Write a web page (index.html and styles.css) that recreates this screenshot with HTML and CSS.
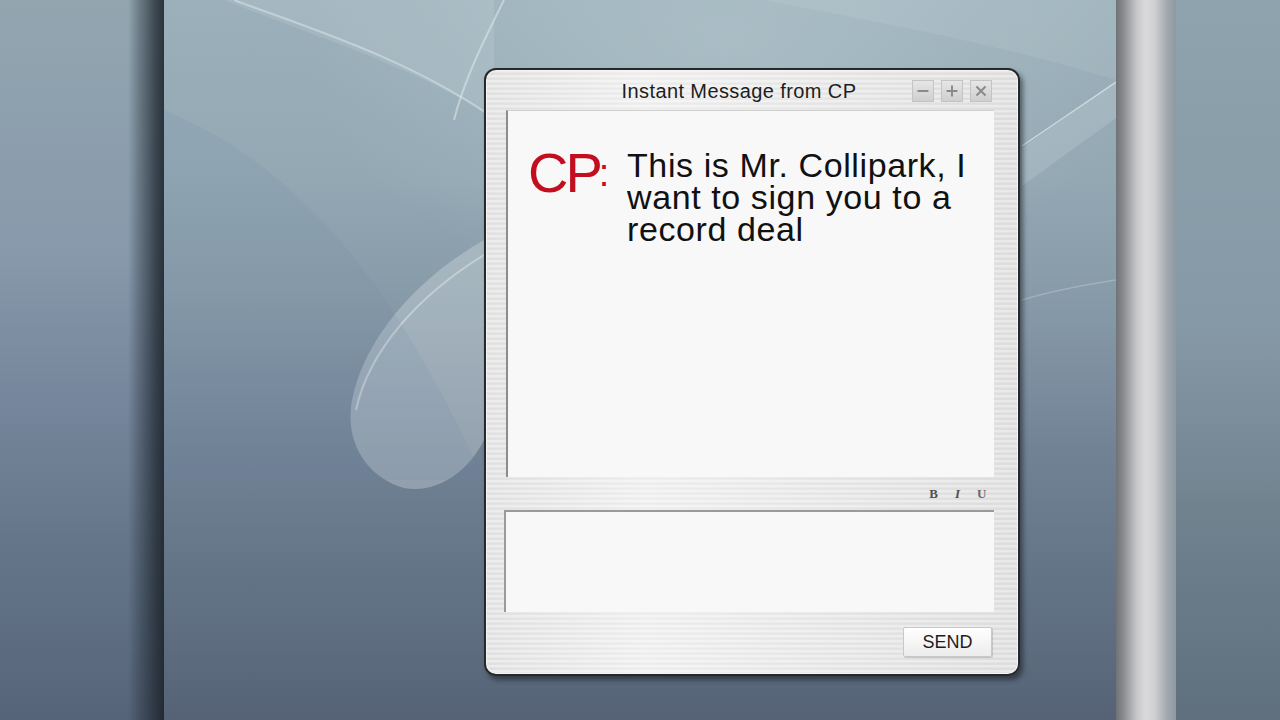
FILE: index.html
```html
<!DOCTYPE html>
<html lang="en">
<head>
  <meta charset="utf-8">
  <title>Instant Message from CP</title>
  <link rel="stylesheet" href="styles.css">
</head>
<body>
  <div class="scene">
    <div class="side side-left"></div>

    <main class="desktop">
      <!-- Обои: светлые волны за окном -->
      <svg class="waves" viewBox="0 0 952 720" preserveAspectRatio="none" aria-hidden="true">
        <path d="M60 0 C160 40 260 70 330 120 L330 0 Z" fill="#ffffff" fill-opacity="0.10"/>
        <path d="M70 0 C150 30 250 60 340 125" fill="none" stroke="#e6f0f2" stroke-opacity="0.45" stroke-width="2"/>
        <path d="M340 0 C320 40 300 80 290 120" fill="none" stroke="#e6f0f2" stroke-opacity="0.5" stroke-width="2"/>
        <path d="M600 0 C700 20 820 40 952 80 L952 0 Z" fill="#ffffff" fill-opacity="0.08"/>
        <path d="M320 240 C250 280 200 340 188 400 C180 445 205 478 240 488 C275 494 305 470 320 440 Z" fill="#e8eef0" fill-opacity="0.3"/>
        <path d="M320 255 C255 295 205 350 192 410" fill="none" stroke="#f4f8f8" stroke-opacity="0.4" stroke-width="2"/>
        <path d="M0 110 C120 160 220 260 320 480 L0 480 Z" fill="#6f82a8" fill-opacity="0.12"/>
        <path d="M858 148 L952 82 L952 118 L858 186 Z" fill="#dfeaee" fill-opacity="0.18"/>
        <path d="M858 146 L952 82" fill="none" stroke="#eef5f7" stroke-opacity="0.6" stroke-width="1.5"/>
        <path d="M858 300 C890 290 920 285 952 280" fill="none" stroke="#eef5f7" stroke-opacity="0.25" stroke-width="1.5"/>
      </svg>

      <section class="im-window">
        <header class="title-bar">
          <h1 class="title">Instant Message from CP</h1>
          <div class="window-controls">
            <button class="control" type="button" aria-label="Minimize">
              <svg viewBox="0 0 22 22"><path d="M5 11 H17" /></svg>
            </button>
            <button class="control" type="button" aria-label="Maximize">
              <svg viewBox="0 0 22 22"><path d="M5 11 H17 M11 5 V17" /></svg>
            </button>
            <button class="control" type="button" aria-label="Close">
              <svg viewBox="0 0 22 22"><path d="M6 6 L16 16 M16 6 L6 16" /></svg>
            </button>
          </div>
        </header>

        <div class="transcript">
          <p class="message">
            <span class="sender">CP<span class="sender-colon">:</span></span>
            <span class="message-text">This is Mr. Collipark, I want to sign you to a record deal</span>
          </p>
        </div>

        <div class="format-bar">
          <span class="format format-bold">B</span>
          <span class="format format-italic">I</span>
          <span class="format format-underline">U</span>
        </div>

        <div class="compose"></div>

        <footer class="window-footer">
          <button class="send-button" type="button">SEND</button>
        </footer>
      </section>
    </main>

    <div class="pillar"></div>
    <div class="side side-right"></div>
  </div>
</body>
</html>
```

FILE: styles.css
```css
*, *::before, *::after {
  margin: 0;
  padding: 0;
  box-sizing: border-box;
}

body {
  width: 1280px;
  height: 720px;
  overflow: hidden;
  font-family: "Liberation Sans", Arial, sans-serif;
  background-color: #7a8c98;
}

.scene {
  display: flex;
  height: 720px;
}

.side {
  height: 100%;
}

.side-left {
  width: 164px;
  background:
    linear-gradient(90deg, rgba(0, 0, 0, 0) 0, rgba(0, 0, 0, 0) 128px, rgba(30, 40, 48, 0.35) 140px, rgba(30, 38, 46, 0.75) 156px, rgba(25, 32, 40, 0.85) 164px),
    linear-gradient(180deg, #92a6b0 0%, #8799ab 35%, #76869c 55%, #66768a 75%, #56647a 100%);
}

.side-right {
  width: 104px;
  background: linear-gradient(180deg, #8ea3ae 0%, #8699a6 45%, #71838f 70%, #5f6f7e 100%);
}

.pillar {
  width: 60px;
  height: 100%;
  background: linear-gradient(90deg, #6f7276 0%, #8a8b8e 12%, #c8c8ca 35%, #dadadc 50%, #cfcfd2 65%, #a3a8ae 85%, #8c9aa4 100%);
}

.desktop {
  position: relative;
  flex: 1;
  padding: 68px 0 0 320px;
  background:
    radial-gradient(ellipse 420px 260px at 560px 40px, rgba(190, 208, 214, 0.45), rgba(190, 208, 214, 0)),
    linear-gradient(180deg, #9bb0ba 0%, #93a8b3 25%, #8497a6 45%, #728396 62%, #647487 80%, #566376 100%);
}

.waves {
  position: absolute;
  top: 0;
  left: 0;
  width: 100%;
  height: 100%;
}

.im-window {
  position: relative;
  display: flex;
  flex-direction: column;
  width: 536px;
  height: 608px;
  border: 2px solid #262829;
  border-radius: 12px;
  background:
    repeating-linear-gradient(180deg, rgba(255, 255, 255, 0.35) 0, rgba(255, 255, 255, 0.35) 2px, rgba(200, 200, 200, 0.12) 3px, rgba(255, 255, 255, 0) 5px),
    linear-gradient(90deg, #e2e2e2 0%, #f0f0f0 30%, #e8e8e8 60%, #dedede 100%);
  box-shadow: 3px 4px 5px rgba(20, 25, 30, 0.55), inset 0 0 0 1px #f5f5f5;
}

.title-bar {
  display: flex;
  align-items: center;
  height: 40px;
  padding: 2px 26px 0 106px;
}

.title {
  flex: 1;
  margin-right: 26px;
  font-size: 20px;
  font-weight: 400;
  text-align: center;
  color: #1d1d1d;
  letter-spacing: 0.4px;
}

.window-controls {
  display: flex;
  gap: 7px;
}

.control {
  width: 22px;
  height: 22px;
  border: 1px solid #c4c4c4;
  background: linear-gradient(180deg, #e6e6e6, #cfcfcf);
}

.control svg {
  display: block;
  width: 100%;
  height: 100%;
  fill: none;
  stroke: #8a8a8a;
  stroke-width: 2.2;
}

.transcript {
  height: 367px;
  margin: 0 24px 0 20px;
  border-top: 1px solid #d0d0d0;
  border-left: 2px solid #8c8c8c;
  background-color: #f8f8f8;
}

.message {
  display: flex;
  align-items: flex-start;
  padding: 34px 0 0 20px;
}

.sender {
  display: flex;
  align-items: flex-start;
  width: 99px;
  flex-shrink: 0;
  font-size: 56px;
  line-height: 1;
  letter-spacing: -3px;
  color: #c20e1e;
}

.sender-colon {
  margin-top: 9px;
  margin-left: -1px;
  font-size: 38px;
  letter-spacing: 0;
}

.message-text {
  width: 360px;
  margin-top: 4px;
  font-size: 34px;
  line-height: 32px;
  letter-spacing: 0.6px;
  color: #111111;
}

.format-bar {
  display: flex;
  justify-content: flex-end;
  align-items: center;
  gap: 15px;
  height: 33px;
  padding-right: 32px;
}

.format {
  width: 9px;
  text-align: center;
  font-family: "Liberation Serif", "Times New Roman", serif;
  font-size: 13px;
  font-weight: 700;
  color: #505050;
}

.format-italic {
  font-style: italic;
}

.format-underline {
  color: #6a6a6a;
}

.compose {
  height: 102px;
  margin: 0 24px 0 18px;
  border-top: 2px solid #9a9a9a;
  border-left: 2px solid #9a9a9a;
  background-color: #f8f8f8;
}

.window-footer {
  display: flex;
  justify-content: flex-end;
  padding: 15px 26px 0 0;
}

.send-button {
  width: 89px;
  height: 30px;
  border: 1px solid #c8c8c8;
  border-radius: 2px;
  background: linear-gradient(180deg, #ffffff, #ececec);
  box-shadow: 1px 1px 1px rgba(0, 0, 0, 0.15);
  font-family: inherit;
  font-size: 18px;
  color: #1e1e1e;
}
```
